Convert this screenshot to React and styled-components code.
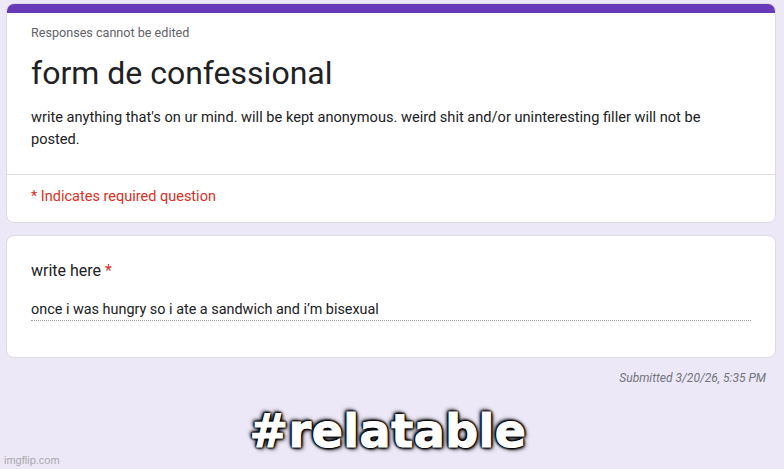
import React from "react";
import styled, { createGlobalStyle } from "styled-components";

const GlobalStyle = createGlobalStyle`
  html, body {
    margin: 0;
    padding: 0;
    background: #ede8f7;
  }
  body {
    font-family: Roboto, "Liberation Sans", Arial, sans-serif;
    color: #202124;
  }
`;

const Page = styled.div`
  position: relative;
  width: 784px;
  height: 469px;
  overflow: hidden;
  box-sizing: border-box;
  padding: 3px 8px 0 6px;
  display: flex;
  flex-direction: column;
`;

const Card = styled.div`
  background: #fff;
  border: 1px solid #dadce0;
  border-radius: 8px;
  box-sizing: border-box;
  width: 770px;
  overflow: hidden;
  margin-bottom: ${(p) => p.$gap || 0}px;
`;

const TopBar = styled.div`
  height: 10px;
  background: #673ab7;
  margin: -1px -1px 0;
`;

const Header = styled.div`
  padding: 12px 24px 24px 24px;
  border-bottom: 1px solid #dadce0;
`;

const Note = styled.div`
  font-size: 12.6px;
  line-height: 16px;
  color: #5f6368;
`;

const Title = styled.h1`
  margin: 12px 0 0;
  font-size: 32px;
  font-weight: 400;
  line-height: 40px;
  color: #202124;
`;

const Description = styled.p`
  margin: 13px 0 0;
  width: 690px;
  font-size: 14.6px;
  line-height: 22px;
  color: #202124;
`;

const Required = styled.div`
  padding: 12px 24px 15px;
  font-size: 14.5px;
  line-height: 20px;
  color: #d93025;
`;

const Question = styled.div`
  padding: 24px 24px 36px;
`;

const Label = styled.div`
  font-size: 16px;
  line-height: 22px;
  color: #202124;
`;

const Star = styled.span`
  color: #d93025;
`;

const Answer = styled.div`
  margin-top: 20px;
  width: 720px;
  font-size: 14.4px;
  line-height: 16px;
  padding-bottom: 2px;
  border-bottom: 1px dotted #9aa0a6;
  color: #202124;
`;

const Submitted = styled.div`
  align-self: flex-end;
  margin: 12px 10px 0 0;
  font-size: 12px;
  line-height: 16px;
  font-style: italic;
  color: #70757a;
`;

const Caption = styled.div`
  margin-top: 19px;
  margin-left: -6px;
  text-align: center;
  font-family: "DejaVu Sans", sans-serif;
  font-weight: 700;
  font-size: 46px;
  line-height: 52px;
  color: #fff;
  letter-spacing: 0.5px;
  -webkit-text-stroke: 1px #fff;
  text-shadow:
    0 0 2px #000, 0 0 2px #000, 0 0 3px #000, 0 0 4px #000,
    1px 1px 2px #000, -1px -1px 2px #000, 1px -1px 2px #000, -1px 1px 2px #000,
    2px 2px 4px rgba(0, 0, 0, 0.8), -2px -2px 4px rgba(0, 0, 0, 0.8);
`;

const Watermark = styled.div`
  position: absolute;
  left: 4px;
  bottom: 3px;
  font-family: "Liberation Sans", Arial, sans-serif;
  font-size: 11px;
  color: #a9a7ad;
`;

export default function App() {
  return (
    <>
      <GlobalStyle />
      <Page>
        <Card $gap={12}>
          <TopBar />
          <Header>
            <Note>Responses cannot be edited</Note>
            <Title>form de confessional</Title>
            <Description>
              write anything that's on ur mind. will be kept anonymous. weird shit and/or uninteresting filler will not be
              posted.
            </Description>
          </Header>
          <Required>* Indicates required question</Required>
        </Card>
        <Card>
          <Question>
            <Label>
              write here <Star>*</Star>
            </Label>
            <Answer>once i was hungry so i ate a sandwich and i’m bisexual</Answer>
          </Question>
        </Card>
        <Submitted>Submitted 3/20/26, 5:35 PM</Submitted>
        <Caption>#relatable</Caption>
        <Watermark>imgflip.com</Watermark>
      </Page>
    </>
  );
}
